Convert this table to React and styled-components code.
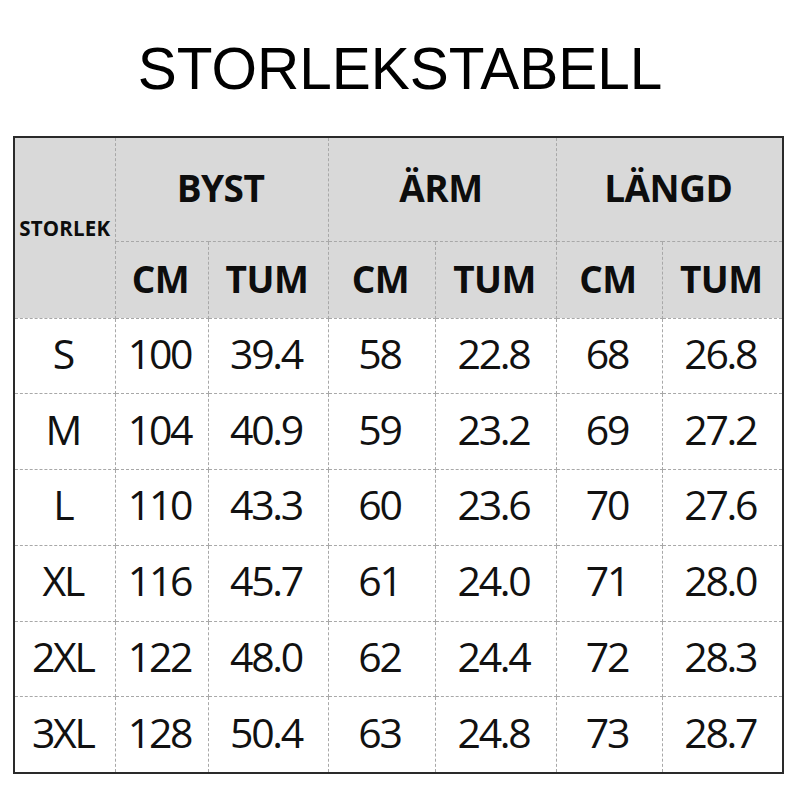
import React from "react";
import styled, { createGlobalStyle } from "styled-components";

const GlobalStyle = createGlobalStyle`
  body {
    margin: 0;
    background: #ffffff;
  }
`;

const groups = ["BYST", "ÄRM", "LÄNGD"];

const rows = [
  ["S", "100", "39.4", "58", "22.8", "68", "26.8"],
  ["M", "104", "40.9", "59", "23.2", "69", "27.2"],
  ["L", "110", "43.3", "60", "23.6", "70", "27.6"],
  ["XL", "116", "45.7", "61", "24.0", "71", "28.0"],
  ["2XL", "122", "48.0", "62", "24.4", "72", "28.3"],
  ["3XL", "128", "50.4", "63", "24.8", "73", "28.7"],
];

const widths = [101, 93, 120, 107, 121, 106, 121];

const App = () => {
  return (
    <Page>
      <GlobalStyle />
      <Title>STORLEKSTABELL</Title>
      <Table>
        <colgroup>
          {widths.map((w, i) => (
            <col key={`col-${i}`} style={{ width: w }} />
          ))}
        </colgroup>
        <thead>
          <GroupRow>
            <SizeHead rowSpan={2}>STORLEK</SizeHead>
            {groups.map((g) => (
              <HeadCell key={g} colSpan={2}>
                {g}
              </HeadCell>
            ))}
          </GroupRow>
          <UnitRow>
            {groups.map((g) => (
              <React.Fragment key={`unit-${g}`}>
                <HeadCell>CM</HeadCell>
                <HeadCell>TUM</HeadCell>
              </React.Fragment>
            ))}
          </UnitRow>
        </thead>
        <tbody>
          {rows.map((row) => (
            <BodyRow key={row[0]}>
              {row.map((v, i) => (
                <Cell key={`${row[0]}-${i}`}>{v}</Cell>
              ))}
            </BodyRow>
          ))}
        </tbody>
      </Table>
    </Page>
  );
};

export default App;

const Page = styled.div`
  width: 800px;
  height: 800px;
  padding-top: 40px;
  box-sizing: border-box;
  background: #ffffff;
`;

const Title = styled.h1`
  margin: 0 0 38px;
  height: 58px;
  font-family: "Liberation Sans", Arial, sans-serif;
  font-weight: 400;
  font-size: 58.5px;
  line-height: 58px;
  text-align: center;
  color: #000;
`;

const Table = styled.table`
  margin-left: 13px;
  width: 769px;
  table-layout: fixed;
  border-collapse: collapse;
  border: 2px solid #2a2a2a;
  font-family: "Open Sans", "Noto Sans", sans-serif;
  color: #111;

  td,
  th {
    border: 1px dashed #a8a8a8;
    padding: 0;
    text-align: center;
    vertical-align: middle;
  }
`;

const GroupRow = styled.tr`
  height: 104px;
  background: #d9d9d9;
`;

const UnitRow = styled.tr`
  height: 77px;
  background: #d9d9d9;
`;

const HeadCell = styled.th`
  font-weight: 700;
  font-size: 37px;
  color: #0d0d0d;
  letter-spacing: -0.5px;

  && {
    padding-bottom: 3px;
    padding-right: 2px;
  }
`;

const SizeHead = styled.th`
  font-weight: 700;
  font-size: 20.5px;
  color: #0d0d0d;
  letter-spacing: 0.2px;
`;

const BodyRow = styled.tr`
  height: 75.8px;
  background: #ffffff;
`;

const Cell = styled.td`
  font-weight: 400;
  font-size: 41px;
  letter-spacing: -2.3px;
  color: #111;

  && {
    padding-bottom: 6px;
    padding-right: 4px;
  }
`;
